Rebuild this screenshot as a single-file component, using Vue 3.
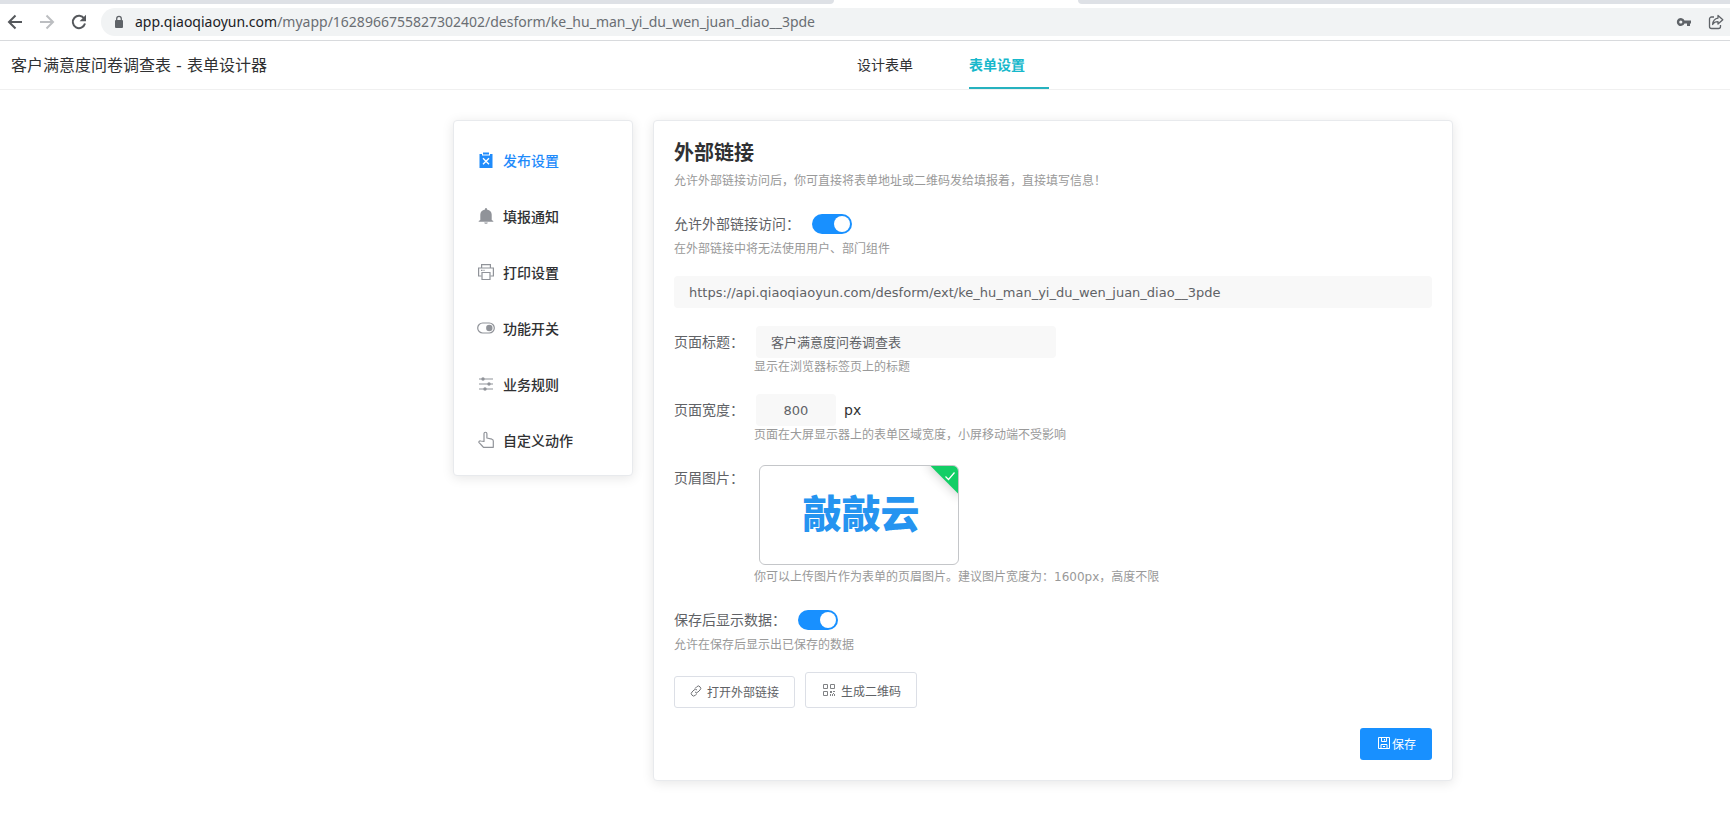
<script setup>
import { ref } from 'vue'

const menu = [
  { key: 'publish', label: '发布设置' },
  { key: 'notify', label: '填报通知' },
  { key: 'print', label: '打印设置' },
  { key: 'switch', label: '功能开关' },
  { key: 'rules', label: '业务规则' },
  { key: 'action', label: '自定义动作' },
]
const active = ref('publish')
const allowExternal = ref(true)
const showAfterSave = ref(true)
const link = ref('https://api.qiaoqiaoyun.com/desform/ext/ke_hu_man_yi_du_wen_juan_diao__3pde')
const pageTitle = ref('客户满意度问卷调查表')
const pageWidth = ref('800')
</script>

<template>
  <div class="page">
    <div class="tabstrip"><span class="tab-left"></span><span class="tab-right"></span></div>
    <div class="toolbar">
      <button class="nav-btn" aria-label="后退">
        <svg width="16" height="16" viewBox="0 0 16 16" fill="none" stroke="#55585c" stroke-width="2"><path d="M15 8H2M8.500 1.500L2 8l6.500 6.500" /></svg>
      </button>
      <button class="nav-btn" aria-label="前进">
        <svg width="16" height="16" viewBox="0 0 16 16" fill="none" stroke="#bcbec1" stroke-width="2"><path d="M1 8h13M7.500 1.500L14 8l-6.500 6.500" /></svg>
      </button>
      <button class="nav-btn" aria-label="刷新">
        <svg width="16" height="16" viewBox="0 0 16 16"><path d="M13.200 4.500A6.200 6.200 0 1 0 14 9.600" fill="none" stroke="#55585c" stroke-width="2" /><path d="M15 .8v6.400H8.600z" fill="#55585c" /></svg>
      </button>
      <div class="omnibox">
        <svg class="lock" width="10" height="14" viewBox="0 0 10 14"><rect x="1" y="5" width="8" height="8" rx="1" fill="#5f6368" /><path d="M2.700 6V3.700a2.300 2.300 0 0 1 4.600 0V6" fill="none" stroke="#5f6368" stroke-width="1.300" /></svg>
        <span class="address"><span class="host">app.qiaoqiaoyun.com</span>/myapp/1628966755827302402/desform/ke_hu_man_yi_du_wen_juan_diao__3pde</span>
        <button class="box-btn" aria-label="密码">
          <svg width="16" height="16" viewBox="0 0 16 16"><path d="M8.500 6.500A4 4 0 1 0 8.500 9.500H11V12h3V9.500h1v-3zM4.800 9.600a1.600 1.600 0 1 1 0-3.200 1.600 1.600 0 0 1 0 3.200z" fill="#5f6368" fill-rule="evenodd" /></svg>
        </button>
        <button class="box-btn" aria-label="分享">
          <svg width="16" height="16" viewBox="0 0 16 16" fill="none" stroke="#5f6368" stroke-width="1.300" stroke-linejoin="round"><path d="M6 3H3.500A2 2 0 0 0 1.500 5v7.500a2 2 0 0 0 2 2h7a2 2 0 0 0 2-2V11" /><path d="M10 1.500l4.800 4.300L10 10V7.700C7.300 7.700 5.700 8.600 4.600 10.500 4.900 7.200 6.600 4.600 10 4.100z" /></svg>
        </button>
      </div>
    </div>

    <header class="header">
      <h1 class="doc-title">客户满意度问卷调查表 - 表单设计器</h1>
      <nav class="tabs">
        <a href="#design" class="tab">设计表单</a>
        <a href="#settings" class="tab current">表单设置</a>
      </nav>
    </header>

    <main class="content">
      <nav class="card side">
        <button v-for="m in menu" :key="m.key" class="item" :class="{ on: active === m.key }" @click="active = m.key">
          <svg width="18" height="18" viewBox="0 0 18 18" fill="none" stroke="currentColor">
            <g v-if="m.key === 'publish'" stroke="none">
              <path d="M2.500 3H5v1.500h8V3h2.500v14h-13z" fill="currentColor" /><rect x="6" y="1.500" width="6" height="2" fill="currentColor" />
              <path d="M6 7.300l6 6M12 7.300l-6 6" stroke="#fff" stroke-width="1.400" />
            </g>
            <g v-else-if="m.key === 'notify'" fill="currentColor" stroke="none">
              <path d="M9 1a1 1 0 0 1 1 1v.4c2.900.5 4.700 2.500 4.700 5V13l1.600 1v.8H1.700V14l1.600-1V7.400c0-2.500 1.800-4.500 4.700-5V2a1 1 0 0 1 1-1zM7.200 15.500h3.600a1.800 1.200 0 0 1-3.600 0z" />
            </g>
            <g v-else-if="m.key === 'print'" stroke-width="1.200">
              <path d="M4.600 5V1.600h8.800V5M4.600 13H1.600V5h14.800v8h-3" /><path d="M5 9.500h8v7H5zM4 7.300h1.500M6.500 7.300h1" />
            </g>
            <g v-else-if="m.key === 'switch'">
              <rect x=".7" y="4" width="16.600" height="10" rx="5" stroke-width="1.200" /><circle cx="12.300" cy="9" r="3.200" fill="currentColor" stroke="none" />
            </g>
            <g v-else-if="m.key === 'rules'" stroke-width="1.200">
              <path d="M2 4h14M2 9h14M2 14h14" /><g fill="currentColor" stroke="none"><circle cx="6" cy="4" r="1.700" /><circle cx="12" cy="9" r="1.700" /><circle cx="8" cy="14" r="1.700" /></g>
            </g>
            <g v-else stroke-width="1.200" stroke-linejoin="round">
              <path d="M7 10.500V2.700a1.450 1.450 0 0 1 2.900 0V7l5 1.200c1 .3 1.400 1 1.400 1.800v6.300H6.500C5 14.800 3.500 13 2 11.600c-.5-.7.300-1.900 1.600-1.600z" />
            </g>
          </svg>
          <span>{{ m.label }}</span>
        </button>
      </nav>

      <section class="card panel">
        <h2>外部链接</h2>
        <p class="intro">允许外部链接访问后，你可直接将表单地址或二维码发给填报着，直接填写信息！</p>

        <div class="field">
          <div class="row">
            <label for="allow">允许外部链接访问：</label>
            <input id="allow" v-model="allowExternal" class="toggle" type="checkbox" role="switch" />
          </div>
          <p class="hint">在外部链接中将无法使用用户、部门组件</p>
        </div>

        <input v-model="link" class="text link" type="text" readonly aria-label="外部链接" />

        <div class="field">
          <div class="row">
            <label for="title">页面标题：</label>
            <input id="title" v-model="pageTitle" class="text title" type="text" />
          </div>
          <p class="hint indent">显示在浏览器标签页上的标题</p>
        </div>

        <div class="field">
          <div class="row">
            <label for="width">页面宽度：</label>
            <input id="width" v-model="pageWidth" class="text width" type="text" />
            <span class="unit">px</span>
          </div>
          <p class="hint indent">页面在大屏显示器上的表单区域宽度，小屏移动端不受影响</p>
        </div>

        <div class="field">
          <div class="row top">
            <label for="upload">页眉图片：</label>
            <button id="upload" class="picture">
              <span class="brand">敲敲云</span>
              <span class="badge"></span>
              <svg class="tick" width="12" height="12" viewBox="0 0 12 12" fill="none" stroke="#fff" stroke-width="1.200"><path d="M1.500 6.500l3 3 6-7" /></svg>
            </button>
          </div>
          <p class="hint indent">你可以上传图片作为表单的页眉图片。建议图片宽度为：1600px，高度不限</p>
        </div>

        <div class="field">
          <div class="row">
            <label for="show">保存后显示数据：</label>
            <input id="show" v-model="showAfterSave" class="toggle" type="checkbox" role="switch" />
          </div>
          <p class="hint">允许在保存后显示出已保存的数据</p>
        </div>

        <div class="actions">
          <button class="btn open">
            <svg width="12" height="12" viewBox="0 0 12 12" fill="none" stroke="#707276" stroke-width="1"><path d="M5 3.500l1.700-1.700a2.200 2.200 0 0 1 3.300 0 2.200 2.200 0 0 1 0 3.200L8 7a2.200 2.200 0 0 1-3 0M7 8.500l-1.700 1.700a2.200 2.200 0 0 1-3.300 0 2.200 2.200 0 0 1 0-3.200L4 5a2.200 2.200 0 0 1 3 0" /></svg>
            打开外部链接
          </button>
          <button class="btn qr">
            <svg width="14" height="14" viewBox="0 0 14 14" fill="none" stroke="#808285"><path d="M1.500 1.500h4v4h-4zM8.500 1.500h4v4h-4zM1.500 8.500h4v4h-4z" /><path d="M8 8h2v2H8zM11 8h2v1h-2zM11 10h1v1h-1zM8 11h1v2H8zM10 11h1v2h-1zM12 11h1v2h-1z" fill="#808285" stroke="none" /></svg>
            生成二维码
          </button>
        </div>

        <div class="footer">
          <button class="save">
            <svg width="12" height="12" viewBox="0 0 12 12" fill="none" stroke="#fff"><path d="M.5.5h11v11H.5z" /><path d="M3.500.5v4h5v-4M3 11.500v-4h6v4M6.500 2v1.500M5 9.500h2" /></svg>保存
          </button>
        </div>
      </section>
    </main>
  </div>
</template>

<style>
body {
  margin: 0;
  background: #fff;
}
</style>

<style scoped>
.page {
  font-family: "DejaVu Sans", "Noto Sans CJK SC", sans-serif;
  font-size: 14px;
  color: #303133;
  overflow-x: hidden;
}
.page * {
  box-sizing: border-box;
}
h1, h2, p {
  margin: 0;
}
button, input {
  font-family: inherit;
  margin: 0;
}
button {
  padding: 0;
  border: 0;
  background: none;
  cursor: pointer;
}
svg {
  display: block;
  flex: none;
}
.tabstrip {
  display: flex;
  justify-content: space-between;
  gap: 244px;
  height: 4px;
}
.tab-left, .tab-right {
  background: #dee1e6;
}
.tab-left {
  flex: 834;
  border-bottom-right-radius: 4px;
}
.tab-right {
  flex: 652;
  border-bottom-left-radius: 4px;
}
.toolbar {
  display: flex;
  align-items: center;
  gap: 16px;
  height: 37px;
  padding: 0 0 1px 7px;
  border-bottom: 1px solid #d8dadd;
}
.omnibox {
  flex: 1;
  display: flex;
  align-items: center;
  height: 28px;
  margin-left: -2px;
  padding: 0 6px 0 13px;
  background: #f1f3f4;
  border-radius: 14px 0 0 14px;
}
.address {
  flex: 1;
  margin-left: 11px;
  font: 14px/24px "Noto Sans", sans-serif;
  color: #6a6e73;
  white-space: nowrap;
}
.host {
  color: #202124;
}
.box-btn {
  margin-left: 16px;
}
.header {
  display: grid;
  grid-template-columns: calc(50% - 8px) 1fr;
  height: 49px;
  border-bottom: 1px solid #f0f0f0;
}
.doc-title {
  padding-left: 11px;
  font-size: 16px;
  font-weight: 400;
  line-height: 50px;
}
.tabs {
  display: flex;
  gap: 32px;
}
.tab {
  width: 80px;
  line-height: 48px;
  height: 48px;
  color: #303133;
  text-decoration: none;
}
.tab.current {
  color: #17b8cb;
  font-weight: 700;
  border-bottom: 2px solid #26b2bf;
}
.content {
  display: flex;
  align-items: flex-start;
  gap: 20px;
  padding: 30px 277px 39px 453px;
}
.card {
  background: #fff;
  border: 1px solid #e8eaed;
  border-radius: 4px;
  box-shadow: 0 2px 12px rgba(0, 0, 0, 0.1);
}
.side {
  flex: none;
  width: 180px;
  padding: 11px 0 7px;
}
.item {
  display: flex;
  align-items: center;
  gap: 8px;
  width: 100%;
  height: 56px;
  padding-left: 23px;
  font-size: 14px;
  font-weight: 500;
  color: #303133;
}
.item svg {
  color: #909399;
}
.item.on, .item.on svg {
  color: #1f8bfb;
}
.panel {
  flex: 1;
  min-width: 0;
  padding: 18px 20px 20px;
}
h2 {
  font-size: 20px;
  line-height: 28px;
  font-weight: 700;
}
.intro {
  margin: 4px 0 17px;
  font-size: 12px;
  line-height: 20px;
  color: #999;
}
.field {
  margin-bottom: 18px;
}
.row {
  display: flex;
  align-items: center;
  min-height: 32px;
}
.row.top {
  align-items: flex-start;
}
.row label {
  margin-right: 12px;
  line-height: 32px;
  color: #606266;
}
.hint {
  font-size: 12px;
  line-height: 18px;
  color: #999;
}
.indent {
  padding-left: 80px;
}
.toggle {
  appearance: none;
  display: flex;
  width: 40px;
  height: 20px;
  padding: 2px;
  border-radius: 10px;
  background: #c0c4cc;
  cursor: pointer;
}
.toggle::after {
  content: "";
  width: 16px;
  height: 16px;
  border-radius: 50%;
  background: #fff;
}
.toggle:checked {
  justify-content: flex-end;
  background: #1890ff;
}
.text {
  height: 32px;
  padding: 0 15px;
  border: 0;
  border-radius: 4px;
  background: #f8f8f8;
  color: #606266;
  font-size: 13px;
  outline: 0;
}
.link {
  display: block;
  width: 100%;
  margin-bottom: 18px;
}
.title {
  width: 300px;
  padding-bottom: 2px;
}
.width {
  width: 80px;
  text-align: center;
}
.unit {
  margin-left: 8px;
}
.picture {
  position: relative;
  display: flex;
  align-items: center;
  justify-content: center;
  width: 200px;
  height: 100px;
  margin: 3px;
  padding-left: 4px;
  border: 1px solid #c4c6c9;
  border-radius: 6px;
  background: #fff;
  overflow: hidden;
}
.brand {
  font-size: 39px;
  line-height: 48px;
  font-weight: 900;
  color: #2594f0;
}
.badge {
  position: absolute;
  top: -8px;
  right: -19px;
  width: 46px;
  height: 26px;
  background: #13ce66;
  box-shadow: 0 1px 12px rgba(0, 0, 0, 0.2);
  transform: rotate(45deg);
}
.tick {
  position: absolute;
  top: 4px;
  right: 2px;
}
.actions {
  display: flex;
  align-items: flex-end;
  gap: 10px;
}
.btn {
  display: flex;
  align-items: center;
  border: 1px solid #dcdfe6;
  border-radius: 3px;
  font-size: 12px;
  color: #606266;
}
.open {
  gap: 5px;
  height: 32px;
  padding: 0 15px 2px;
}
.qr {
  gap: 5px;
  height: 36px;
  padding: 0 15px 0 16px;
}
.footer {
  display: flex;
  justify-content: flex-end;
  margin-top: 20px;
}
.save {
  display: flex;
  align-items: center;
  gap: 2px;
  height: 32px;
  padding: 0 16px 2px 18px;
  border-radius: 3px;
  background: #1890ff;
  color: #fff;
  font-size: 12px;
}
</style>
